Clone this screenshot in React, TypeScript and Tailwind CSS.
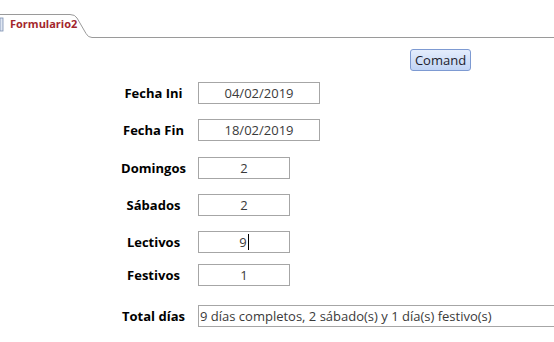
import React from 'react';

const font = { fontFamily: '"Open Sans", "Liberation Sans", sans-serif' };

interface FieldRowProps {
  label: string;
  value: string;
  width: string;
  top: string;
  align?: 'center' | 'left';
  caret?: boolean;
}

const FieldRow: React.FC<FieldRowProps> = ({ label, value, width, top, align = 'center', caret }) => (
  <div className={`flex items-center pl-[113px] ${top}`}>
    <div className="w-[81px] shrink-0 text-center text-[13px] font-bold text-black leading-none">{label}</div>
    <div
      className={`ml-[4px] h-[22px] shrink-0 ${width} border border-[#a6a6a6] bg-white flex items-center text-[13px] text-[#3a3a3a] leading-none
        ${align === 'center' ? 'justify-center' : 'justify-start pl-[1px] whitespace-nowrap overflow-hidden'}`}
    >
      <span>{value}</span>
      {caret && <span className="inline-block w-px h-[16px] bg-black ml-[1px]" />}
    </div>
  </div>
);

const TabHeader: React.FC = () => (
  <div className="relative h-[38px] w-full">
    <svg className="absolute inset-0" width="554" height="38" viewBox="0 0 554 38">
      <path
        d="M0 14.5 H70 Q75 14.5 77 18 L86 33.5 Q88 37.5 92 37.5 H554"
        fill="white"
        stroke="#9a9a9a"
        strokeWidth="1"
      />
      <rect x="0" y="18" width="3" height="13" fill="#dfe7f3" stroke="#7a8fb0" strokeWidth="0.8" />
    </svg>
    <div className="absolute left-[10px] top-[18px] text-[11px] font-bold text-[#a3262c] leading-none">
      Formulario2
    </div>
  </div>
);

export default function App() {
  return (
    <div className="w-[554px] h-[342px] bg-white overflow-hidden" style={font}>
      <TabHeader />
      <div className="flex justify-end pr-[83px] mt-[11px]">
        <button className="w-[61px] h-[22px] rounded-[3px] border border-[#7d9ad2] bg-gradient-to-b from-[#e4edfc] to-[#c1d4f5] text-[13px] text-[#1c1c2c] leading-none">
          Comand
        </button>
      </div>
      <FieldRow label="Fecha Ini" value="04/02/2019" width="w-[122px]" top="mt-[11px]" />
      <FieldRow label="Fecha Fin" value="18/02/2019" width="w-[122px]" top="mt-[15px]" />
      <FieldRow label="Domingos" value="2" width="w-[92px]" top="mt-[16px]" />
      <FieldRow label="Sábados" value="2" width="w-[92px]" top="mt-[15px]" />
      <FieldRow label="Lectivos" value="9" width="w-[92px]" top="mt-[15px]" caret />
      <FieldRow label="Festivos" value="1" width="w-[92px]" top="mt-[11px]" />
      <FieldRow
        label="Total días"
        value="9 días completos, 2 sábado(s) y 1 día(s) festivo(s)"
        width="w-[380px]"
        top="mt-[19px]"
        align="left"
      />
    </div>
  );
}
